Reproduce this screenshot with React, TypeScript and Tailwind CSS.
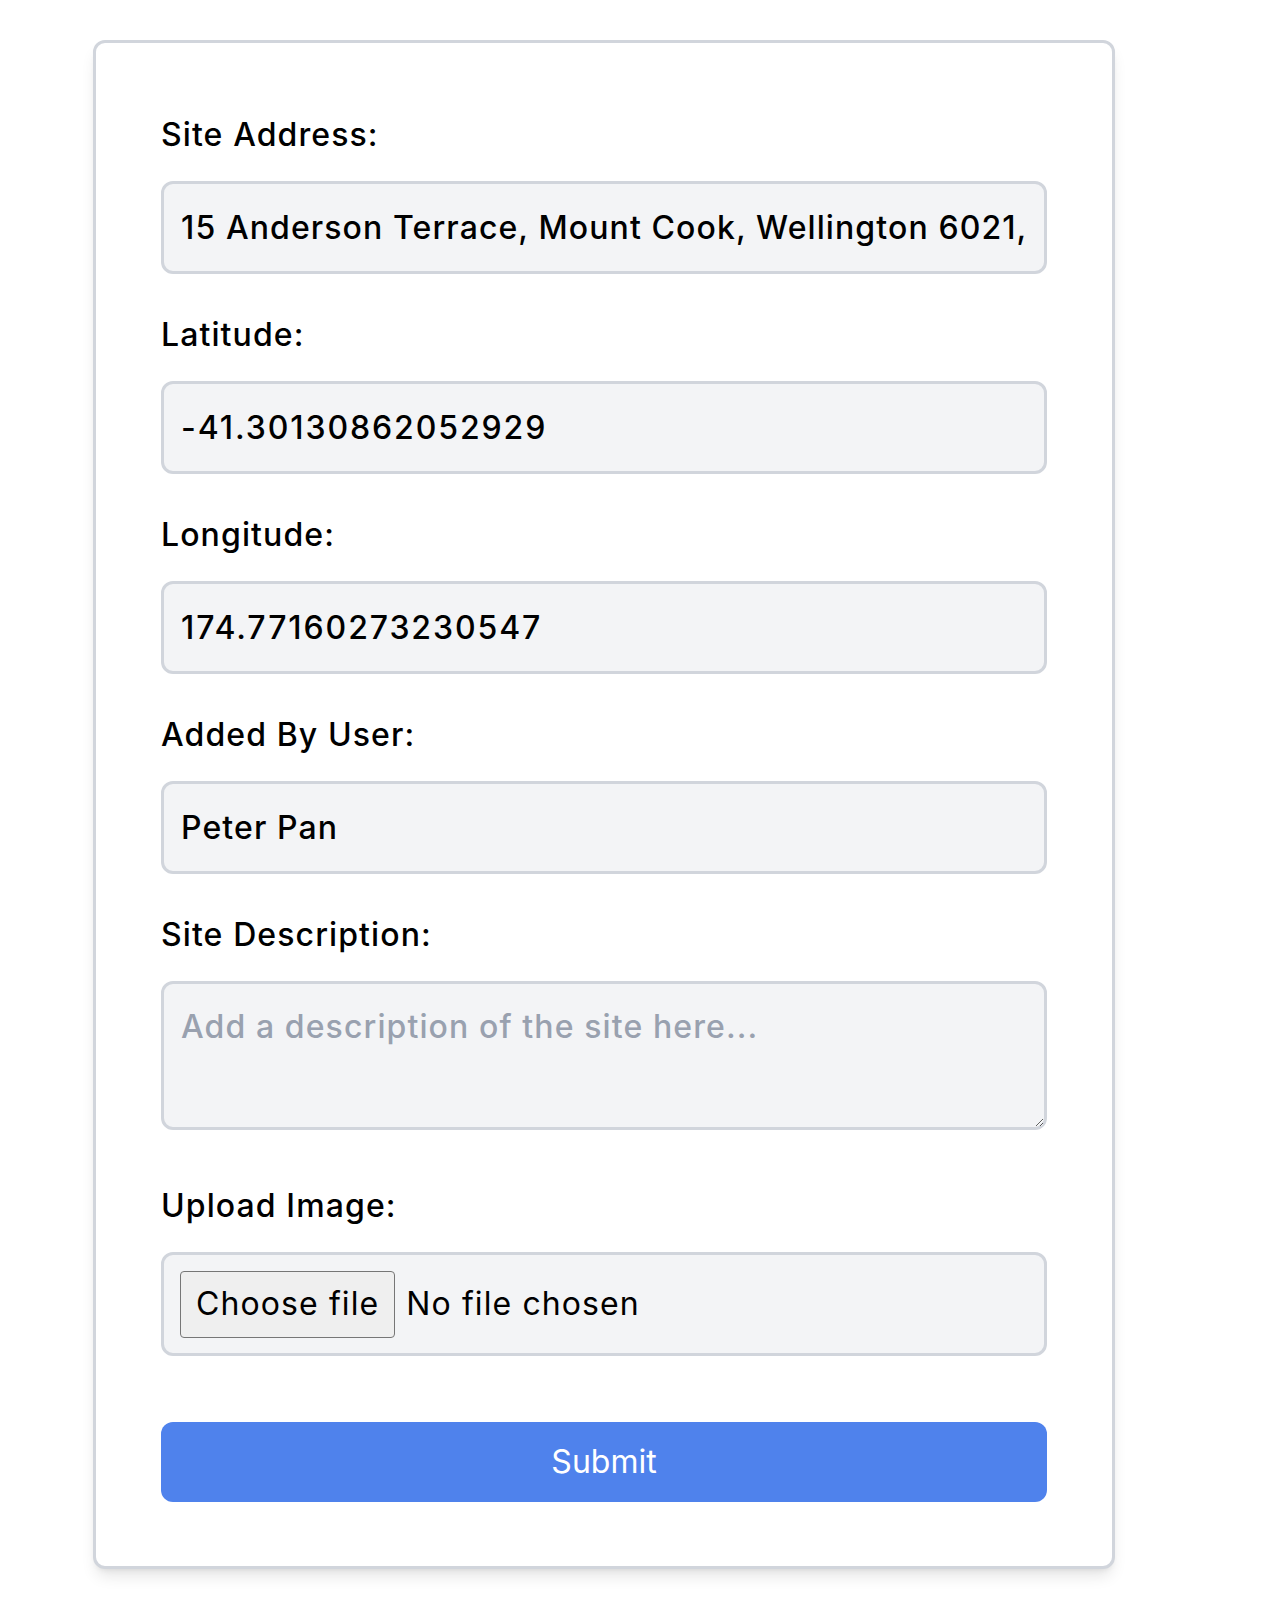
const fields = [
  { label: "Site Address:", value: "15 Anderson Terrace, Mount Cook, Wellington 6021, New Zealand", numeric: false },
  { label: "Latitude:", value: "-41.30130862052929", numeric: true },
  { label: "Longitude:", value: "174.77160273230547", numeric: true },
  { label: "Added By User:", value: "Peter Pan", numeric: false },
];

const labelCls = "block text-[32px] leading-[40px] font-medium tracking-[1.1px] text-black mb-[26px]";
const boxCls =
  "block w-full rounded-[12px] border-[3px] border-gray-300 bg-gray-100 text-[32px] leading-[48px] font-medium text-black outline-none";

export default function App() {
  return (
    <div className="min-h-screen bg-white pt-[40px] pl-[93px] font-['Inter',sans-serif]">
      <form
        className="w-[1022px] rounded-[12px] border-[3px] border-gray-300 bg-white px-[65px] pt-[72px] pb-[64px] shadow-lg"
        onSubmit={(e) => e.preventDefault()}
      >
        {fields.map((f) => (
          <div key={f.label} className="mb-[41px]">
            <label className={labelCls}>{f.label}</label>
            <input
              type="text"
              readOnly
              defaultValue={f.value}
              className={`${boxCls} h-[93px] px-[17px] ${f.numeric ? "tracking-[1.9px]" : "tracking-[1.1px]"}`}
            />
          </div>
        ))}

        <div className="mb-[56px]">
          <label className={labelCls}>Site Description:</label>
          <textarea
            placeholder="Add a description of the site here..."
            className={`${boxCls} h-[149px] px-[17px] py-[19px] tracking-[1.1px] placeholder:text-gray-400`}
          />
        </div>

        <div className="mb-[66px]">
          <label className={labelCls}>Upload Image:</label>
          <div className="flex h-[104px] items-center rounded-[12px] border-[3px] border-gray-300 bg-gray-100 px-[16px] text-[32px] tracking-[1.1px] text-black">
            <span className="flex h-[67px] items-center rounded-[4px] border-[1.5px] border-[#767676] bg-[#efefef] px-[15px]">
              Choose file
            </span>
            <span className="ml-[11px]">No file chosen</span>
          </div>
        </div>

        <button
          type="submit"
          className="block h-[80px] w-full rounded-[12px] bg-[#4f82ec] text-[32px] text-white"
        >
          Submit
        </button>
      </form>
    </div>
  );
}
